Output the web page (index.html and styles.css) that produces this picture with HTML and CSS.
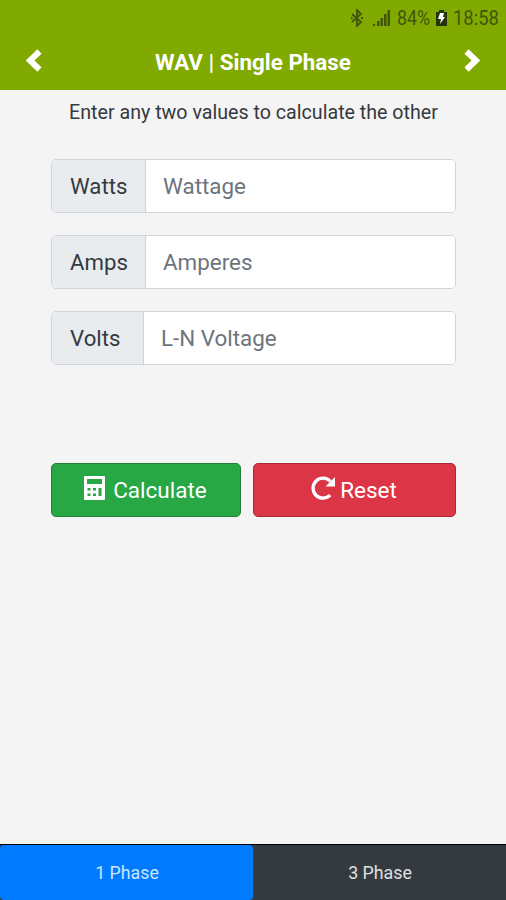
FILE: index.html
```html
<!DOCTYPE html>
<html lang="en">
<head>
<meta charset="utf-8">
<title>WAV | Single Phase</title>
<link rel="stylesheet" href="styles.css">
</head>
<body>
<header class="header">
  <div class="status">
    <svg class="bluetooth" width="12" height="18" viewBox="0 0 12 18"><path d="M1 5l9 8-4 4V1l4 4-9 8M0 9h1.5M10 9h2" /></svg>
    <svg class="signal" width="18" height="17" viewBox="0 0 18 17"><path d="M0 14h2v2H0zM4 11h2.5v5H4zM7.500 8h2.500v8H7.500zM11 4h2.500v12H11zM14.500 0H17v16h-2.500z"/></svg>
    <span class="percent">84%</span>
    <svg class="battery" width="11" height="16" viewBox="0 0 11 16"><path class="cell" d="M0 2h3V0h5v2h3v14H0z"/><path class="bolt" d="M4 3h4L7 7h2l-5 7 1-5H2z"/></svg>
    <span class="time">18:58</span>
  </div>
  <nav class="bar">
    <svg class="chevron" width="16" height="23" viewBox="0 0 16 23"><path d="M13.500 2.500L4 11.500l9.500 9"/></svg>
    <h1 class="title">WAV | Single Phase</h1>
    <svg class="chevron" width="16" height="23" viewBox="0 0 16 23"><path d="M2.500 2.500L12 11.500l-9.500 9"/></svg>
  </nav>
</header>
<main class="main">
  <p class="hint">Enter any two values to calculate the other</p>
  <form class="form">
    <label class="group"><span class="prefix">Watts</span><input class="field" type="text" placeholder="Wattage"></label>
    <label class="group"><span class="prefix">Amps</span><input class="field" type="text" placeholder="Amperes"></label>
    <label class="group"><span class="prefix prefix-volts">Volts</span><input class="field" type="text" placeholder="L-N Voltage"></label>
    <div class="actions">
      <button class="btn calculate" type="button">
        <svg width="21" height="24" viewBox="0 0 21 24"><path fill="#fff" fill-rule="evenodd" d="M1 0h19q1 0 1 1v22q0 1-1 1H1q-1 0-1-1V1q0-1 1-1zM3 3v5h15V3zM3.500 12v2.500h3V12zm5.500 0v2.500h3V12zM3.500 17.500v2.500h3v-2.500zm5.500 0v2.500h3v-2.500zm5.500-5.500v8h3v-8z"/></svg>
        <span>Calculate</span>
      </button>
      <button class="btn reset" type="button">
        <svg width="25" height="24" viewBox="0 0 25 24"><path fill="none" stroke="#fff" stroke-width="3.300" d="M19.200 19.200A10 10 0 1 1 19.400 5.400"/><path fill="#fff" d="M24 1v9.500h-9.500z"/></svg>
        <span>Reset</span>
      </button>
    </div>
  </form>
</main>
<footer class="tabs">
  <a class="tab active">1 Phase</a>
  <a class="tab">3 Phase</a>
</footer>
</body>
</html>
```

FILE: styles.css
```css
* { box-sizing: border-box; }
body {
  margin: 0;
  height: 900px;
  display: flex;
  flex-direction: column;
  background: #f4f4f4;
  color: #343a40;
  font-family: Roboto, sans-serif;
}
.header { height: 90px; background: #80aa00; }
.status {
  height: 36px;
  padding-right: 7px;
  display: flex;
  align-items: center;
  justify-content: flex-end;
  color: #40560a;
  font-size: 20px;
  line-height: 36px;
}
.bluetooth { fill: none; stroke: #40560a; stroke-width: 1.8; margin-right: 10px; }
.signal { fill: #40560a; margin-right: 6px; }
.percent, .time { display: block; transform-origin: left; white-space: nowrap; }
.percent { width: 34px; transform: scaleX(.89); }
.battery { margin: 0 6px 0 5px; }
.cell { fill: #26340a; }
.bolt { fill: #fff; }
.time { width: 46px; transform: scaleX(.92); }
.bar {
  height: 54px;
  padding: 0 26px 0 26px;
  display: flex;
  align-items: center;
  justify-content: space-between;
}
.chevron { fill: none; stroke: #fff; stroke-width: 6; margin-bottom: 6px; }
.title { margin: 0 0 2px; color: #fff; font-size: 22.4px; font-weight: 700; line-height: 30px; }
.main { flex: 1; }
.hint { margin: 8px 0 0 1px; text-align: center; font-size: 19.65px; line-height: 30px; }
.form { margin: 31px 50px 0 51px; }
.group {
  display: flex;
  height: 54px;
  margin-bottom: 22px;
  border: 1.5px solid #ced4da;
  border-radius: 5px;
  overflow: hidden;
  background: #fff;
}
.prefix {
  width: 94px;
  padding-left: 18px;
  background: #e9ecef;
  border-right: 1px solid #ced4da;
  font-size: 22.2px;
  line-height: 52px;
}
.prefix-volts { width: 92px; }
.field {
  flex: 1;
  min-width: 0;
  padding: 0 17px;
  border: 0;
  background: #fff;
  font: 22.4px Roboto, sans-serif;
}
.field::placeholder { color: #6c757d; opacity: 1; }
.actions { display: flex; gap: 12px; margin-top: 98px; }
.btn {
  height: 54px;
  padding: 0 1px 1px 0;
  display: flex;
  align-items: center;
  justify-content: center;
  color: #fff;
  border-radius: 5px;
  font: 22.5px Roboto, sans-serif;
}
.btn svg { margin-bottom: 3px; }
.calculate { width: 190px; gap: 8px; background: #28a745; border: 1px solid #208039; }
.reset { flex: 1; gap: 4px; background: #dc3545; border: 1px solid #a92835; }
.tabs { height: 56px; display: flex; background: #343a40; border-top: 1px solid #000; }
.tab {
  flex: 1;
  padding-left: 1px;
  color: #dfe0e2;
  text-align: center;
  font-size: 17.8px;
  line-height: 55px;
}
.active { background: #007bff; border-radius: 4px; color: #cce5ff; }
```
